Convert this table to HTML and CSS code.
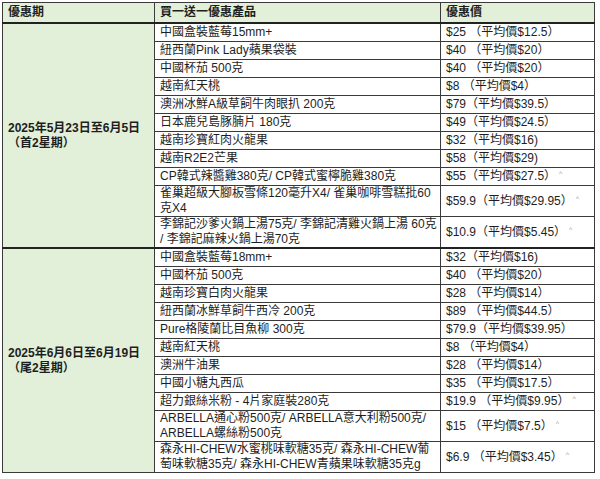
FILE: index.html
```html
<!DOCTYPE html>
<html lang="zh-Hant">
<head>
<meta charset="utf-8">
<title>優惠</title>
<link rel="stylesheet" href="styles.css">
</head>
<body>
<table class="deals">
  <colgroup>
    <col class="c-period">
    <col class="c-product">
    <col class="c-price">
  </colgroup>
  <thead>
    <tr>
      <th>優惠期</th>
      <th>買一送一優惠產品</th>
      <th>優惠價</th>
    </tr>
  </thead>
  <tbody class="group">
    <tr>
      <td class="period" rowspan="11">2025年5月23日至6月5日<br>（首2星期）</td>
      <td>中國盒裝藍莓15mm+</td>
      <td>$25 （平均價$12.5）</td>
    </tr>
    <tr><td>紐西蘭Pink Lady蘋果袋裝</td><td>$40 （平均價$20）</td></tr>
    <tr><td>中國杯茄 500克</td><td>$40 （平均價$20）</td></tr>
    <tr><td>越南紅天桃</td><td>$8 （平均價$4）</td></tr>
    <tr><td>澳洲冰鮮A級草飼牛肉眼扒 200克</td><td>$79（平均價$39.5）</td></tr>
    <tr><td>日本鹿兒島豚腩片 180克</td><td>$49（平均價$24.5）</td></tr>
    <tr><td>越南珍寶紅肉火龍果</td><td>$32（平均價$16)</td></tr>
    <tr><td>越南R2E2芒果</td><td>$58（平均價$29)</td></tr>
    <tr><td>CP韓式辣醬雞380克/ CP韓式蜜檸脆雞380克</td><td>$55（平均價$27.5）<sup class="mark">^</sup></td></tr>
    <tr class="dbl"><td>雀巢超級大腳板雪條120毫升X4/ 雀巢咖啡雪糕批60<br>克X4</td><td>$59.9（平均價$29.95）<sup class="mark">^</sup></td></tr>
    <tr class="dbl"><td>李錦記沙爹火鍋上湯75克/ 李錦記清雞火鍋上湯 60克<br>/ 李錦記麻辣火鍋上湯70克</td><td>$10.9（平均價$5.45）<sup class="mark">^</sup></td></tr>
  </tbody>
  <tbody class="group">
    <tr>
      <td class="period" rowspan="11">2025年6月6日至6月19日<br>（尾2星期）</td>
      <td>中國盒裝藍莓18mm+</td>
      <td>$32（平均價$16)</td>
    </tr>
    <tr><td>中國杯茄 500克</td><td>$40 （平均價$20）</td></tr>
    <tr><td>越南珍寶白肉火龍果</td><td>$28 （平均價$14）</td></tr>
    <tr><td>紐西蘭冰鮮草飼牛西冷 200克</td><td>$89 （平均價$44.5）</td></tr>
    <tr><td>Pure格陵蘭比目魚柳 300克</td><td>$79.9（平均價$39.95）</td></tr>
    <tr><td>越南紅天桃</td><td>$8 （平均價$4）</td></tr>
    <tr><td>澳洲牛油果</td><td>$28 （平均價$14）</td></tr>
    <tr><td>中國小糖丸西瓜</td><td>$35 （平均價$17.5）</td></tr>
    <tr><td>超力銀絲米粉 - 4片家庭裝280克</td><td>$19.9 （平均價$9.95）<sup class="mark">^</sup></td></tr>
    <tr class="dbl"><td>ARBELLA通心粉500克/ ARBELLA意大利粉500克/<br>ARBELLA螺絲粉500克</td><td>$15 （平均價$7.5）<sup class="mark">^</sup></td></tr>
    <tr class="dbl"><td>森永HI-CHEW水蜜桃味軟糖35克/ 森永HI-CHEW葡<br>萄味軟糖35克/ 森永HI-CHEW青蘋果味軟糖35克g</td><td>$6.9 （平均價$3.45）<sup class="mark">^</sup></td></tr>
  </tbody>
</table>
</body>
</html>
```

FILE: styles.css
```css
html, body {
  margin: 0;
  padding: 0;
  background: #ffffff;
}

body {
  padding: 2px 0 0 2px;
  font-family: "Liberation Sans", Arial, "Noto Sans CJK TC", sans-serif;
  font-size: 12px;
  color: #1e1e1e;
}

.deals {
  border-collapse: collapse;
  table-layout: fixed;
  width: 592px;
  border: 1px solid #2a2a2a;
}

.c-period { width: 152px; }
.c-product { width: 286px; }
.c-price { width: 154px; }

.deals th,
.deals td {
  border: 1px solid #3a3a3a;
  padding: 1px 5px;
  line-height: 15px;
  height: 15px;
  text-align: left;
  vertical-align: middle;
  white-space: nowrap;
  overflow: hidden;
}

.deals th {
  background: #e2efd9;
  font-weight: bold;
  padding-top: 2px;
  padding-bottom: 2px;
}

.deals .period {
  background: #e2efd9;
  font-weight: bold;
  vertical-align: middle;
  white-space: normal;
}

.deals .dbl td {
  padding-top: 0;
  padding-bottom: 0;
  height: 30px;
}

.group {
  border-top: 2px solid #222222;
}

.mark {
  font-size: 7px;
  color: #9a9a9a;
  vertical-align: top;
  line-height: 10px;
  margin-left: 3px;
}
```
